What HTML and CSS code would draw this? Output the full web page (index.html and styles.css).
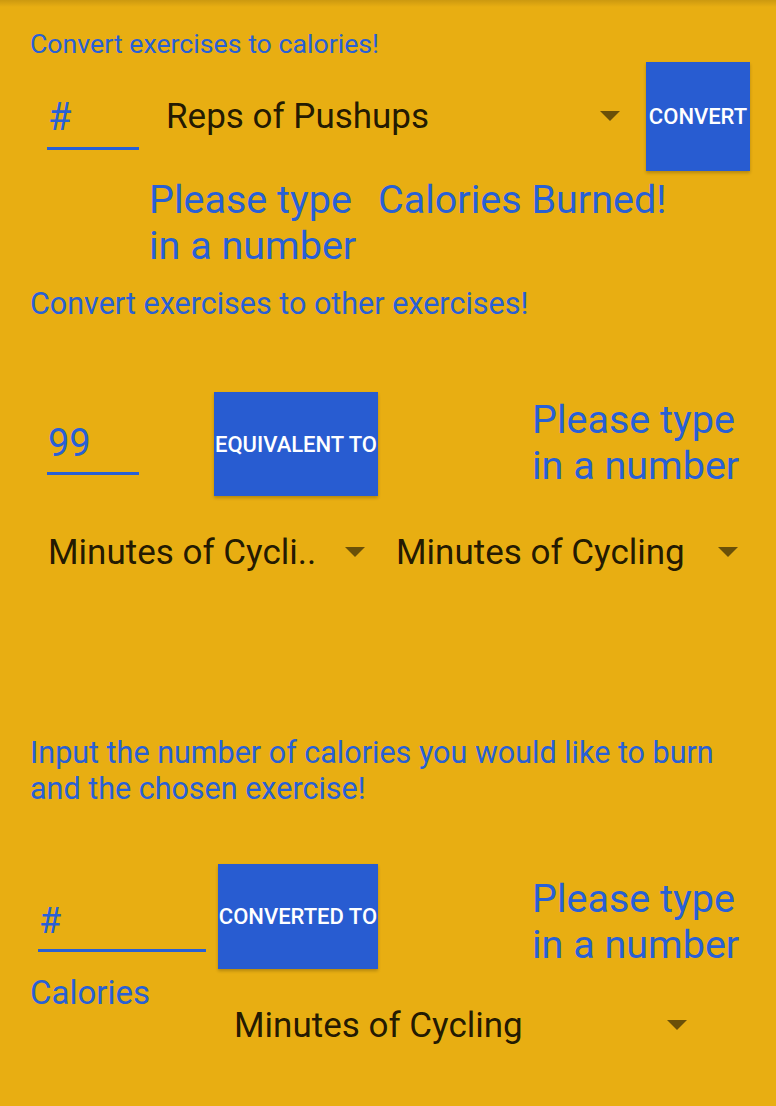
FILE: index.html
```html
<!DOCTYPE html>
<html lang="en">
<head>
<meta charset="utf-8">
<title>Exercise Converter</title>
<link rel="stylesheet" href="styles.css">
</head>
<body>
<main class="page">
  <section class="sec sec-one">
    <h2 class="heading heading-one">Convert exercises to calories!</h2>
    <div class="row row-one">
      <div class="field field-one"><span class="hint">#</span></div>
      <div class="dropdown dd-reps"><span class="dd-text">Reps of Pushups</span><span class="arrow"></span></div>
      <button class="btn btn-convert">CONVERT</button>
    </div>
    <div class="row row-result">
      <p class="msg msg-left">Please type<br>in a number</p>
      <p class="msg">Calories Burned!</p>
    </div>
  </section>

  <section class="sec sec-two">
    <h2 class="heading">Convert exercises to other exercises!</h2>
    <div class="row row-three">
      <div class="field field-three"><span class="hint">99</span></div>
      <button class="btn btn-equiv">EQUIVALENT TO</button>
      <p class="msg msg-right">Please type<br>in a number</p>
    </div>
    <div class="row row-drops">
      <div class="dropdown dd-from"><span class="dd-text">Minutes of Cycli..</span><span class="arrow"></span></div>
      <div class="dropdown dd-to"><span class="dd-text">Minutes of Cycling</span><span class="arrow"></span></div>
    </div>
  </section>

  <section class="sec sec-three">
    <h2 class="heading">Input the number of calories you would like to burn<br>and the chosen exercise!</h2>
    <div class="grid-three">
      <div class="field field-five"><span class="hint small">#</span></div>
      <button class="btn btn-conv-to">CONVERTED TO</button>
      <p class="msg msg-right5">Please type<br>in a number</p>
      <p class="label-cal">Calories</p>
      <div class="dropdown dd-target"><span class="dd-text">Minutes of Cycling</span><span class="arrow"></span></div>
    </div>
  </section>
</main>
</body>
</html>
```

FILE: styles.css
```css
* { box-sizing: border-box; }

html, body {
  margin: 0;
  padding: 0;
}

body {
  width: 776px;
  height: 1106px;
  overflow: hidden;
  background: linear-gradient(rgba(0,0,0,0.12), rgba(0,0,0,0) 7px) no-repeat, #E8AE12;
  font-family: Roboto, "Liberation Sans", sans-serif;
}

.page {
  padding: 27px 0 0 30px;
}

.heading {
  margin: 0;
  font-size: 30.5px;
  line-height: 36px;
  font-weight: 400;
  color: #2860D6;
  white-space: nowrap;
}

.heading-one {
  font-size: 26.7px;
  line-height: 35px;
}

.row {
  display: flex;
  align-items: flex-start;
}

.field {
  border-bottom: 3px solid #2860D6;
  color: #2860D6;
}

.hint {
  display: block;
  font-size: 38px;
  line-height: 44px;
  padding-left: 1px;
}

.hint.small {
  font-size: 36px;
  line-height: 40px;
}

.dropdown {
  display: flex;
  align-items: flex-start;
  justify-content: space-between;
}

.dd-text {
  font-size: 35px;
  line-height: 40px;
  color: rgba(0,0,0,0.87);
  white-space: nowrap;
}

.arrow {
  width: 0;
  height: 0;
  margin-top: 14px;
  border-left: 10px solid transparent;
  border-right: 10px solid transparent;
  border-top: 10px solid rgba(0,0,0,0.54);
}

.btn {
  display: flex;
  align-items: center;
  justify-content: center;
  border: none;
  padding: 0;
  margin: 0;
  background: #285CD1;
  color: #fff;
  font-family: Roboto, "Liberation Sans", sans-serif;
  font-weight: 500;
  font-size: 22px;
  white-space: nowrap;
  box-shadow: 0 2px 3px rgba(0,0,0,0.22);
  overflow: visible;
}

.msg {
  margin: 0;
  font-size: 39.5px;
  line-height: 46px;
  color: #2860D6;
  white-space: nowrap;
}

/* Section one */
.row-one { height: 109px; }
.field-one {
  width: 92px;
  margin: 33px 0 0 17px;
  padding-bottom: 8px;
}
.dd-reps {
  width: 454px;
  margin: 35px 0 0 27px;
}
.btn-convert {
  width: 104px;
  height: 109px;
  margin-left: 26px;
}

.row-result { margin-top: 6px; }
.msg-left {
  width: 229px;
  margin-left: 119px;
}

/* Section two */
.sec-two .heading { margin-top: 17px; }
.row-three { margin-top: 70px; }
.field-three {
  width: 92px;
  margin: 29px 0 0 17px;
  padding-bottom: 7px;
}
.btn-equiv {
  width: 164px;
  height: 104px;
  margin-left: 75px;
}
.msg-right {
  margin: 5px 0 0 154px;
}

.row-drops { margin-top: 37px; }
.dd-from {
  width: 317px;
  margin-left: 18px;
}
.dd-to {
  width: 342px;
  margin-left: 31px;
}

/* Section three */
.sec-three .heading { margin-top: 162px; }
.grid-three {
  display: grid;
  grid-template-columns: 188px 160px auto;
  align-items: start;
  margin-top: 57px;
}
.field-five {
  width: 168px;
  margin: 37px 0 0 8px;
  padding-bottom: 8px;
}
.btn-conv-to {
  width: 160px;
  height: 105px;
}
.msg-right5 {
  margin: 12px 0 0 154px;
}
.label-cal {
  margin: 6px 0 0 0;
  font-size: 33px;
  line-height: 36px;
  color: #2860D6;
}
.dd-target {
  grid-column: 2 / 4;
  width: 453px;
  margin: 37px 0 0 16px;
}
```
